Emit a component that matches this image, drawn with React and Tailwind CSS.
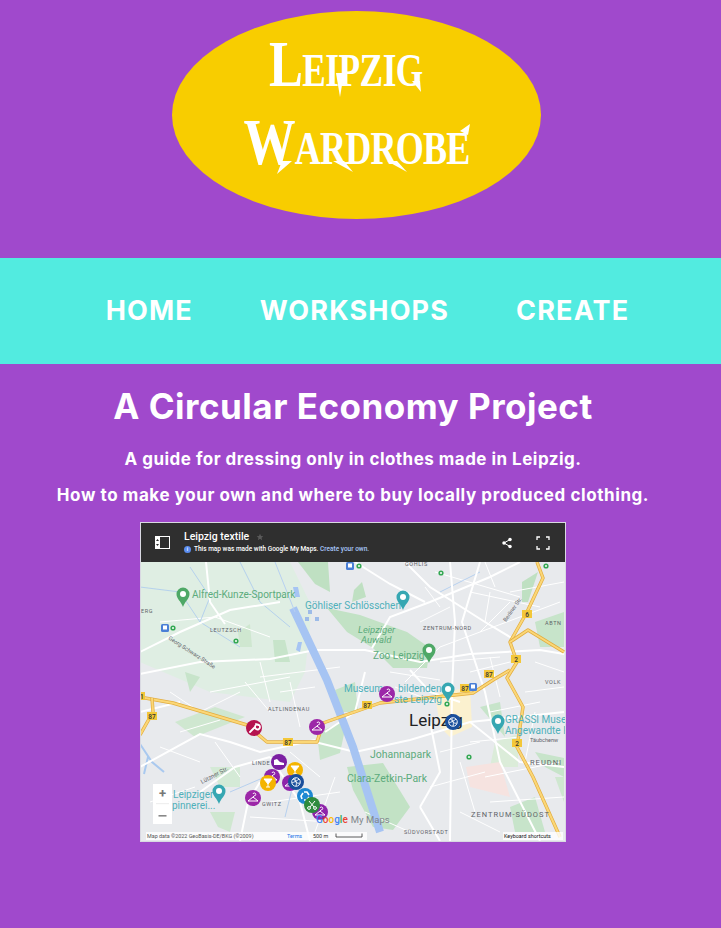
import React from "react";

const white = [
  "M0 112 L60 100 L130 97 L175 88 L225 88 L280 100 L330 92 L400 88 L424 92",
  "M66 0 L70 40 L85 62",
  "M0 90 L40 70 L90 48 L140 40",
  "M0 150 L40 140",
  "M0 205 L60 172 L90 180 L120 190 L175 178",
  "M60 230 L95 205 L130 195",
  "M130 195 L160 240 L170 279",
  "M175 180 L215 190 L270 178 L330 160 L424 150",
  "M232 86 L250 55 L290 40 L350 15 L380 0",
  "M310 0 L315 60 L312 130 L310 279",
  "M340 0 L322 60 L345 130 L360 200 L400 279",
  "M265 0 L290 25 L345 60 L375 78",
  "M215 0 L250 22 L285 40",
  "M270 108 L290 130 L320 140",
  "M100 279 L108 240 L120 220",
  "M225 110 L215 150 L185 170",
  "M280 245 L300 279",
  "M330 160 L380 200 L424 205",
  "M290 160 L300 210 L280 245",
];
const thin = [
  "M265 120 L300 85 L420 40","M330 30 L400 45","M340 70 L370 40","M300 100 L360 95","M350 95 L360 135",
  "M20 60 L75 55 L130 75","M120 100 L130 140","M70 130 L150 115","M150 120 L160 165","M105 120 L130 150",
  "M195 215 L175 270","M130 240 L200 230","M110 255 L190 260","M150 190 L180 215","M345 215 L420 200",
  "M350 240 L424 235","M330 180 L380 175","M370 30 L424 20","M280 60 L310 45","M330 110 L370 100",
  "M385 130 L424 125","M290 225 L345 210","M320 250 L360 270","M345 0 L355 25","M395 100 L424 110",
  "M40 170 L80 158","M20 185 L60 200","M75 180 L100 215","M10 240 L55 225",
  "M295 10 L380 35","M285 25 L300 45","M350 30 L345 60","M250 110 L300 118","M255 125 L295 140",
  "M300 190 L340 180","M320 200 L335 250","M350 150 L400 140","M395 150 L385 200","M120 115 L200 105",
  "M140 130 L175 125","M60 150 L100 130","M30 130 L60 150","M225 250 L270 270",
];
const thinBlue = ["M0 25 L40 30 L60 60 L100 85","M100 0 L120 40 L150 65","M300 30 L340 10","M90 230 L125 215","M145 255 L155 215","M50 5 L70 35 L60 60"];
const parks = [
  ["0,0 150,0 172,45 165,110 150,140 70,130 0,100","#dfeee3"],
  ["187,46 220,53 267,70 290,86 287,106 253,106 233,86 207,70","#c2e2c5"],
  ["158,0 175,22 190,30 188,0","#bfe0c2"],
  ["212,40 226,35 222,20 214,28","#bfe0c2"],
  ["207,205 243,201 270,245 253,268 233,265 213,228","#c2e2c5"],
  ["177,171 207,158 200,191 180,198","#c7e4ca"],
  ["382,20 398,10 388,40 382,40","#bfe0c2"],
  ["395,60 424,50 424,85 400,85","#c7e4ca"],
  ["105,155 75,145 35,160 55,175","#cfe7d0"],
  ["70,205 100,205 100,225 80,225","#d4ead6"],
  ["98,70 110,62 112,85 100,85","#cfe7d0"],
  ["133,78 145,78 150,100 135,100","#c7e4ca"],
  ["45,110 60,115 50,130","#c7e4ca"],
  ["70,250 95,250 90,270 78,265","#cfe7d0"],
  ["355,180 378,172 378,205 350,205","#dbecd9"],
  ["415,215 424,215 424,240","#cfe7d0"],
  ["370,245 395,235 405,270 375,270","#c7e4ca"],
  ["395,190 424,196 424,215 405,205","#c7e4ca"],
  ["195,128 215,120 218,150 200,150","#c7e4ca"],
  ["340,145 360,140 365,175","#c7e4ca"],
];

function Pin({ x, y, c, icon }) {
  const ic = {
    hanger: <path d="M0 -4 a1.4 1.4 0 1 1 1.3 1.8 L0 -1 L-5 3 L5 3 L0 -1" fill="none" stroke="#fff" strokeWidth="1" />,
    wrench: <path d="M-4 4 L1 -1 M1 -1 a2.500 2.500 0 1 0 -0 -0.100 M2 -4 L4 -3" fill="none" stroke="#fff" strokeWidth="1.800" strokeLinecap="round" />,
    ball: <g fill="none" stroke="#fff" strokeWidth="0.900"><circle r="4.300" /><path d="M-3 -3 C0 -2 1 1 0 4 M3 -3 C1 -1 -2 0 -4 1 M4 1 C1 2 -1 0 -1 -4" /></g>,
    shoe: <path d="M-5 -2 L-2 -3 L1 0 L5 1 L5 3 L-5 3 Z" fill="#fff" />,
    glass: <g fill="none" stroke="#fff" strokeWidth="1"><path d="M-4 -4 L4 -4 L0 1 Z" fill="#fff" /><path d="M0 1 L0 4 M-2 4 L2 4" /></g>,
    recycle: <path d="M-1 -4 L2 -4 L4 -1 M4 1 L2 4 L-1 4 M-3 3 L-4 0 L-2 -3" fill="none" stroke="#fff" strokeWidth="1.600" />,
    scissors: <g fill="none" stroke="#fff" strokeWidth="1"><circle cx="-3" cy="3" r="1.400" /><circle cx="3" cy="3" r="1.400" /><path d="M-2 2 L3 -4 M2 2 L-3 -4" /></g>,
  }[icon];
  return <g transform={`translate(${x} ${y})`}><circle r="8" fill={c} />{ic}</g>;
}

function MapPic() {
  return (
    <svg viewBox="1 0 424 279" className="block w-[424px] h-[279px] font-normal" style={{ fontFamily: "Roboto, sans-serif" }}>
      <rect x="0" y="0" width="426" height="280" fill="#e8eaed" />
      {parks.map(([p, f], i) => <polygon key={i} points={p} fill={f} />)}
      <polygon points="326,205 360,200 370,235 330,225" fill="#f6e3e0" />
      <polygon points="295,132 330,125 332,165 310,175 300,165" fill="#fbf1cf" />
      {thin.map((d, i) => <path key={i} d={d} stroke="#fff" strokeWidth="1" fill="none" />)}
      {thinBlue.map((d, i) => <path key={i} d={d} stroke="#a9c9ef" strokeWidth="0.800" fill="none" />)}
      <path d="M0 182 L12 200 L24 210 M8 195 L4 212" stroke="#a9c9ef" strokeWidth="2" fill="none" />
      {white.map((d, i) => <path key={i} d={d} stroke="#fff" strokeWidth="2" fill="none" />)}
      <path d="M153 46 L187 118 L213 185 L240 270" stroke="#a6c4f3" strokeWidth="8" fill="none" />
      <path d="M135 0 L155 50" stroke="#b7d0f0" strokeWidth="1" fill="none" />
      <polygon points="153,25 158,25 160,35 155,35" fill="#a6c4f3" />
      <polygon points="158,80 162,80 160,90 156,88" fill="#a6c4f3" />
      <g fill="#9dbbe8"><rect x="168" y="48" width="4" height="4" /><rect x="175" y="55" width="4" height="4" /><rect x="165" y="55" width="4" height="4" /></g>
      <g fill="none" strokeLinejoin="round">
        {["M0 135 L33 141 L107 163 L127 180 L177 180 L183 161 L240 141 L333 131 L353 118 L370 108",
          "M397 0 L403 16 L387 50 L370 80 L377 100 L367 116 L383 145 L377 185 L393 215 L420 275",
          "M370 80 L388 68 L424 90",
          "M0 173 L13 150 L12 136"].map((d, i) => (
          <g key={i}><path d={d} stroke="#e2ad3f" strokeWidth="3.400" /><path d={d} stroke="#fbd777" strokeWidth="2" /></g>
        ))}
      </g>
      {[[12,154,"87"],[148,180,"87"],[227,143,"87"],[325,126,"87"],[349,112,"87"],[377,181,"2"],[376,97,"2"],[387,52,"6"],[0,134,"81"]].map(([x,y,t],i)=>(
        <g key={i}><rect x={x-5} y={y-4} width="10" height="8" fill="#f3c739" /><text x={x} y={y+2.5} fontSize="6.500" textAnchor="middle" fill="#333" fontWeight="500">{t}</text></g>
      ))}
      <g fontSize="10" fill="#5cab7c" fontWeight="400">
        <text x="52" y="36">Alfred-Kunze-Sportpark</text>
        <text x="218" y="71" fontStyle="italic" fontSize="9.500">Leipziger</text>
        <text x="221" y="81" fontStyle="italic" fontSize="9.500">Auwald</text>
        <text x="233" y="97">Zoo Leipzig</text>
        <text x="230" y="196" fontSize="10.500">Johannapark</text>
        <text x="207" y="220" fontSize="10.500">Clara-Zetkin-Park</text>
      </g>
      <g fontSize="10" fill="#4fb0ba" fontWeight="400">
        <text x="165" y="47">Göhliser Schlösschen</text>
        <text x="204" y="130">Museum</text>
        <text x="258" y="130">bildenden</text>
        <text x="254" y="141">ste Leipzig</text>
        <text x="365" y="161">GRASSI Museu</text>
        <text x="365" y="172">Angewandte K</text>
        <text x="33" y="236">Leipziger</text>
        <text x="32" y="247">pinnerei...</text>
      </g>
      <g fontSize="5.500" fill="#5f6368" letterSpacing="0.600">
        <text x="70" y="70">LEUTZSCH</text>
        <text x="283" y="68">ZENTRUM-NORD</text>
        <text x="265" y="4">GOHLIS</text>
        <text x="128" y="149">ALTLINDENAU</text>
        <text x="112" y="203">LINDE</text>
        <text x="122" y="244">GWITZ</text>
        <text x="264" y="272">SÜDVORSTADT</text>
        <text x="1" y="51">ERG</text>
        <text x="405" y="63">ABTN</text>
        <text x="405" y="122">VOLK</text>
      </g>
      <g fontSize="7.500" fill="#5f6368" letterSpacing="1" fontWeight="400">
        <text x="390" y="203">REUDNI</text>
        <text x="331" y="255">ZENTRUM-SÜDOST</text>
      </g>
      <text x="28" y="77" fontSize="5.500" fill="#5f6368" transform="rotate(33 28 77)">Georg-Schwarz-Straße</text>
      <text x="62" y="222" fontSize="6" fill="#5f6368" transform="rotate(-28 62 222)">Lützner Str.</text>
      <text x="366" y="60" fontSize="5.500" fill="#5f6368" transform="rotate(-55 366 60)">Berliner Str.</text>
      <text x="390" y="180" fontSize="5.500" fill="#5f6368">Täubchenw</text>
      <text x="269" y="164" fontSize="17" fill="#202124" fontWeight="400">Leipzig</text>
      {[[43,36,"#4ea866"],[263,39,"#36a7b2"],[289,92,"#4ea866"],[308,131,"#36a7b2"],[358,163,"#36a7b2"],[79,233,"#36a7b2"]].map(([x,y,c],i)=>(
        <g key={i} transform={`translate(${x} ${y})`}><path d="M-6.500 -4 a6.500 6.500 0 1 1 13 0 C6.500 1 2 3 0 9 C-2 3 -6.500 1 -6.500 -4Z" fill={c} /><circle cy="-4" r="3" fill="#fff" /></g>
      ))}
      {[[210,4],[25,66],[333,125]].map(([x,y],i)=>(
        <g key={i}><rect x={x-4} y={y-4} width="8" height="8" rx="1.500" fill="#4a7fd6" /><rect x={x-2} y={y-2.5} width="4" height="4" fill="#fff" /></g>
      ))}
      {[[219,4],[33,66],[301,11],[406,4],[96,79],[307,142],[329,195]].map(([x,y],i)=>(
        <g key={i}><circle cx={x} cy={y} r="2.600" fill="#34a853" /><circle cx={x} cy={y} r="1" fill="#fff" /></g>
      ))}
      <Pin x={114} y={166} c="#b5134f" icon="wrench" />
      <Pin x={177} y={165} c="#9c27a8" icon="hanger" />
      <Pin x={247} y={132} c="#9c27a8" icon="hanger" />
      <Pin x={113} y={236} c="#9c27a8" icon="hanger" />
      <Pin x={139} y={200} c="#7b1fa2" icon="shoe" />
      <Pin x={155} y={208} c="#f4b400" icon="glass" />
      <Pin x={132} y={215} c="#8e24aa" icon="hanger" />
      <Pin x={150} y={221} c="#8e24aa" icon="hanger" />
      <Pin x={180} y={250} c="#8e24aa" icon="hanger" />
      <Pin x={128} y={221} c="#f4b400" icon="glass" />
      <Pin x={156} y={220} c="#1a4f9c" icon="ball" />
      <Pin x={313} y={160} c="#1a4f9c" icon="ball" />
      <Pin x={165} y={234} c="#1e88d2" icon="recycle" />
      <Pin x={172} y={243} c="#2e8b3d" icon="scissors" />
      <text x="176" y="261" fontSize="10" fontWeight="500">
        <tspan fill="#4285f4">G</tspan><tspan fill="#ea4335">o</tspan><tspan fill="#fbbc05">o</tspan><tspan fill="#4285f4">g</tspan><tspan fill="#34a853">l</tspan><tspan fill="#ea4335">e</tspan>
        <tspan fill="#80868b" dx="3" fontSize="9.500" fontWeight="400">My Maps</tspan>
      </text>
      <rect x="13" y="222" width="19" height="40" fill="#fff" />
      <rect x="16" y="241.500" width="13" height="0.600" fill="#e0e0e0" />
      <text x="22.500" y="236" fontSize="13" fontWeight="700" textAnchor="middle" fill="#777">+</text>
      <rect x="18.500" y="253" width="8" height="1.600" fill="#888" />
      <rect x="6" y="270" width="221" height="8" fill="#fff" fillOpacity="0.800" />
      <rect x="363" y="270" width="60" height="8" fill="#fff" fillOpacity="0.800" />
      <text x="7" y="276" fontSize="5.400" fill="#555" fontWeight="400">Map data ©2022 GeoBasis-DE/BKG (©2009)</text>
      <text x="147" y="276" fontSize="5.400" fill="#1a73e8" fontWeight="400">Terms</text>
      <text x="173" y="275.500" fontSize="5.400" fill="#333" fontWeight="400">500 m</text>
      <path d="M196 271.500 V275 H222 V271.500" stroke="#333" strokeWidth="0.800" fill="none" />
      <text x="364" y="276" fontSize="5.400" fill="#111" fontWeight="400">Keyboard shortcuts</text>
    </svg>
  );
}

export default function App() {
  return (
    <div className="min-h-screen bg-[#a049cc] font-['Inter','Liberation_Sans',sans-serif] font-bold text-white">
      <header className="h-[258px] pt-[11px] pr-[8px] flex justify-center">
        <div className="relative w-[369px] h-[208px] rounded-[50%] bg-[#f8cd00] flex flex-col items-center font-['Liberation_Serif',serif] [font-variant-caps:small-caps] leading-none">
          <div className="mt-[22px] mr-[21px] text-[62px] tracking-[-0.6px] scale-x-[0.82] scale-y-[1.06]">Leipzig</div>
          <div className="mt-[16px] text-[62px] tracking-[-1px] scale-x-[0.84] scale-y-[1.06]">Wardrobe</div>
          <svg className="absolute left-0 top-0" width="369" height="208" viewBox="0 0 369 208" fill="#fff">
            <polygon points="164,62 172,62 168,86" />
            <polygon points="240,70 248,70 249,81 245,76" />
            <polygon points="110,150 120,150 105,163" />
            <polygon points="161,150 172,150 181,161" />
            <polygon points="215,150 225,150 235,161" />
            <polygon points="288,120 298,113 296,124" />
          </svg>
        </div>
      </header>
      <nav className="h-[106px] pl-[14px] bg-[#52ebe0] flex items-center justify-center gap-[67px] text-[27px] tracking-[1.15px]">
        <a>HOME</a>
        <a>WORKSHOPS</a>
        <a>CREATE</a>
      </nav>
      <main className="w-[706px] flex flex-col items-center">
        <h1 className="mt-[21px] text-[35px] leading-[42px] tracking-[0.5px]">A Circular Economy Project</h1>
        <p className="mt-[21px] text-[17px] leading-[22px] tracking-[0.48px]">A guide for dressing only in clothes made in Leipzig.</p>
        <p className="mt-[14px] text-[17px] leading-[22px] tracking-[0.58px]">How to make your own and where to buy locally produced clothing.</p>
        <div className="mt-[16px] w-[426px] border border-[#d9d9e2] bg-white">
          <div className="h-[39px] bg-[#2f2f2f] flex items-center pl-[14px] pr-[15px] font-['Roboto',sans-serif]">
            <svg width="15" height="13" viewBox="0 0 15 13" className="mr-[14px]">
              <rect x="0.500" y="0.500" width="14" height="12" fill="none" stroke="#fff" />
              <rect x="0" y="0" width="5" height="13" fill="#fff" />
              <path d="M2.500 3 L4 5 H1 Z M2.500 10 L4 8 H1 Z" fill="#2f2f2f" />
            </svg>
            <div className="flex flex-col">
              <div className="flex items-center text-[10.5px] leading-[12px] font-medium">
                Leipzig textile
                <svg width="8" height="8" viewBox="0 0 24 24" className="ml-[7px]"><path d="M12 2l3 7 7 .6-5.400 4.700 1.700 7.200L12 17.600 5.700 21.500l1.700-7.200L2 9.600 9 9z" fill="#5a5a5a" /></svg>
              </div>
              <div className="flex items-center mt-[2px] text-[6.5px] leading-[9px] font-medium">
                <span className="w-[7px] h-[7px] rounded-full bg-[#5b8def] mr-[3px] flex items-center justify-center text-[5px] leading-none">i</span>
                This map was made with Google My Maps.&nbsp;<span className="text-[#a8c7fa]">Create your own.</span>
              </div>
            </div>
            <svg width="12" height="12" viewBox="0 0 24 24" className="ml-auto mr-[23px]" fill="#fff">
              <circle cx="18" cy="5" r="3.500" /><circle cx="18" cy="19" r="3.500" /><circle cx="6" cy="12" r="3.500" />
              <path d="M18 5 L6 12 L18 19" stroke="#fff" strokeWidth="2" fill="none" />
            </svg>
            <svg width="14" height="14" viewBox="0 0 14 14" fill="none" stroke="#fff" strokeWidth="1.300">
              <path d="M1 4 V1 H4 M10 1 H13 V4 M13 10 V13 H10 M4 13 H1 V10" />
            </svg>
          </div>
          <MapPic />
        </div>
      </main>
    </div>
  );
}
